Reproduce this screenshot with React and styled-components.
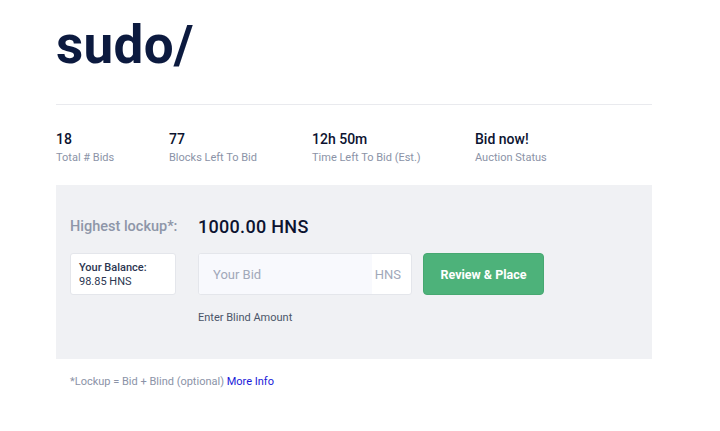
import styled, { createGlobalStyle } from "styled-components";

const GlobalStyle = createGlobalStyle`
  body {
    margin: 0;
    background: #ffffff;
    font-family: Roboto, "Liberation Sans", sans-serif;
  }
`;

const stats = [
  { value: "18", label: "Total # Bids", width: 113 },
  { value: "77", label: "Blocks Left To Bid", width: 143 },
  { value: "12h 50m", label: "Time Left To Bid (Est.)", width: 163 },
  { value: "Bid now!", label: "Auction Status", width: 120 },
];

const App = () => {
  return (
    <>
      <GlobalStyle />
      <Page>
        <Title>sudo/</Title>
        <Divider />
        <StatsRow>
          {stats.map((s) => (
            <Stat key={s.label} $width={s.width}>
              <StatValue>{s.value}</StatValue>
              <StatLabel>{s.label}</StatLabel>
            </Stat>
          ))}
        </StatsRow>
        <BidPanel>
          <LockupRow>
            <LockupLabel>Highest lockup*:</LockupLabel>
            <LockupValue>1000.00 HNS</LockupValue>
          </LockupRow>
          <ControlsRow>
            <BalanceBox>
              <BalanceTitle>Your Balance:</BalanceTitle>
              <BalanceAmount>98.85 HNS</BalanceAmount>
            </BalanceBox>
            <InputColumn>
              <BidInputWrap>
                <BidInput placeholder="Your Bid" />
                <Unit>HNS</Unit>
              </BidInputWrap>
              <BlindLink>Enter Blind Amount</BlindLink>
            </InputColumn>
            <PlaceButton>Review &amp; Place</PlaceButton>
          </ControlsRow>
        </BidPanel>
        <Footnote>
          *Lockup = Bid + Blind (optional) <MoreInfo href="#">More Info</MoreInfo>
        </Footnote>
      </Page>
    </>
  );
};

const Page = styled.div`
  width: 596px;
  padding: 0 0 0 56px;
`;

const Title = styled.h1`
  margin: 0;
  padding-top: 14px;
  font-size: 53px;
  line-height: 62px;
  font-weight: 700;
  color: #0c1a3f;
  letter-spacing: 0.3px;
`;

const Divider = styled.hr`
  margin: 28px 0 0;
  border: 0;
  border-top: 1px solid #e9eaee;
`;

const StatsRow = styled.div`
  display: flex;
  padding-top: 25px;
`;

const Stat = styled.div`
  display: flex;
  flex-direction: column;
  width: ${(p) => p.$width}px;
`;

const StatValue = styled.div`
  font-size: 14px;
  line-height: 18px;
  font-weight: 500;
  color: #0c1330;
`;

const StatLabel = styled.div`
  font-size: 11px;
  line-height: 14px;
  margin-top: 3px;
  color: #8b93a7;
`;

const BidPanel = styled.div`
  margin-top: 20px;
  height: 174px;
  box-sizing: border-box;
  padding: 29px 14px 0;
  background: #f0f1f4;
`;

const LockupRow = styled.div`
  display: flex;
  align-items: center;
  height: 24px;
`;

const LockupLabel = styled.span`
  width: 128px;
  font-size: 14.5px;
  font-weight: 500;
  color: #8e96a8;
`;

const LockupValue = styled.span`
  font-size: 18px;
  font-weight: 500;
  color: #0c1330;
  letter-spacing: 0.3px;
`;

const ControlsRow = styled.div`
  display: flex;
  align-items: flex-start;
  margin-top: 15px;
`;

const BalanceBox = styled.div`
  width: 106px;
  height: 42px;
  box-sizing: border-box;
  padding: 7px 8px 0;
  background: #ffffff;
  border: 1px solid #e4e6eb;
  border-radius: 3px;
  font-size: 11px;
  line-height: 14px;
  color: #2c3651;
`;

const BalanceTitle = styled.div`
  font-weight: 500;
`;

const BalanceAmount = styled.div``;

const InputColumn = styled.div`
  display: flex;
  flex-direction: column;
  margin-left: 22px;
`;

const BidInputWrap = styled.div`
  display: flex;
  align-items: stretch;
  width: 214px;
  height: 42px;
  box-sizing: border-box;
  border: 1px solid #e4e6eb;
  border-radius: 3px;
  background: #ffffff;
  overflow: hidden;
`;

const BidInput = styled.input`
  flex: 1;
  min-width: 0;
  border: 0;
  outline: none;
  padding: 0 14px;
  background: #f8f9fd;
  font-family: Roboto, "Liberation Sans", sans-serif;
  font-size: 13px;
  color: #0c1330;

  &::placeholder {
    color: #a1a8b9;
  }
`;

const Unit = styled.span`
  display: flex;
  align-items: center;
  padding: 0 10px 0 3px;
  font-size: 13px;
  color: #a1a8b9;
`;

const BlindLink = styled.span`
  margin-top: 16px;
  font-size: 11px;
  color: #4b5569;
`;

const PlaceButton = styled.button`
  margin-left: 11px;
  width: 121px;
  height: 42px;
  border: 1px solid #47a871;
  border-radius: 4px;
  background: #4db27a;
  color: #ffffff;
  font-family: Roboto, "Liberation Sans", sans-serif;
  font-size: 12.5px;
  font-weight: 700;
  cursor: pointer;
`;

const Footnote = styled.p`
  margin: 16px 0 0 14px;
  font-size: 11px;
  color: #8b93a7;
`;

const MoreInfo = styled.a`
  color: #1a1ad9;
  text-decoration: none;
`;

export default App;
